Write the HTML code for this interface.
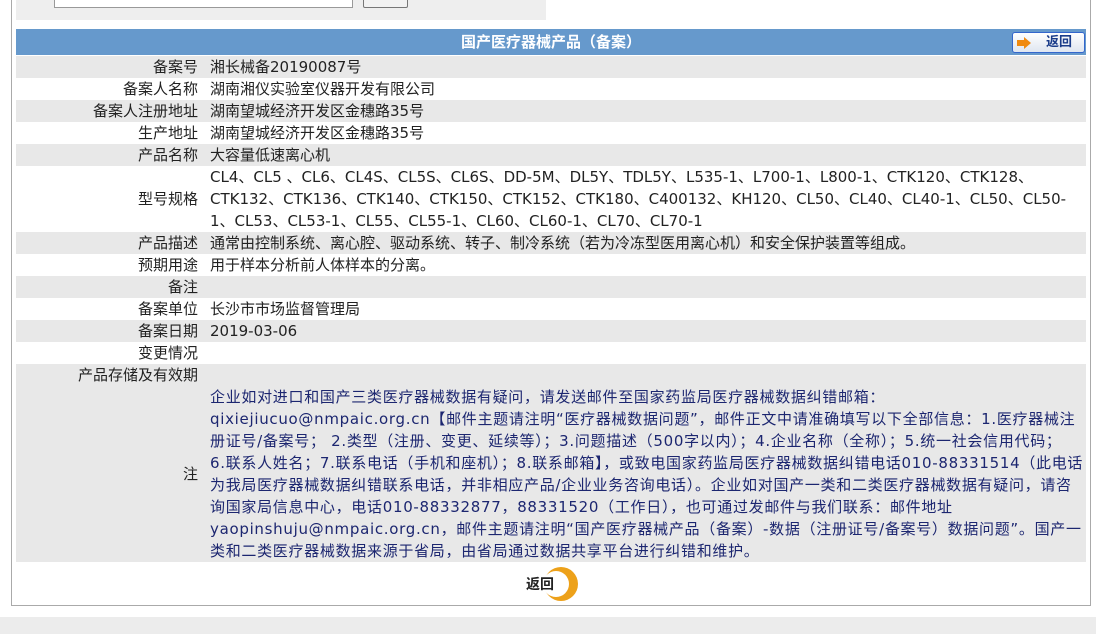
<!DOCTYPE html>
<html><head><meta charset="utf-8"><style>
*{margin:0;padding:0;box-sizing:border-box}
body{width:1096px;height:634px;background:#fff;font-family:"DejaVu Sans","Noto Sans CJK SC",sans-serif;font-size:15px;color:#222;position:relative;overflow:hidden}
.panel{position:absolute;left:11px;top:-2px;width:1080px;height:608px;border:1px solid #aaa;background:#fff}
.foot{position:absolute;left:0;top:617px;width:1096px;height:17px;background:#ececec}
.search{position:absolute;left:16px;top:0;width:530px;height:20px;background:#eee}
.inp{position:absolute;left:38px;top:-2px;width:299px;height:10px;border:1px solid #999;background:#fff}
.btn{position:absolute;left:347px;top:-2px;width:45px;height:10px;border:1px solid #777;border-radius:2px;background:#f2f2f2}
.hdr{position:absolute;left:16px;top:29px;width:1070px;height:26px;background:#6699cc;color:#fff;font-weight:bold;text-align:center;line-height:26px;font-size:15px}
.rb{position:absolute;right:1px;top:3px;width:73px;height:21px;border:1px solid #36c;border-radius:3px;background:linear-gradient(#fff,#dfe6f0);color:#1a3c8a;font-size:13px;line-height:19px;text-align:right;padding-right:12px}
.rb i{position:absolute;left:11px;top:4px;width:0;height:0;border-left:7px solid #f08a10;border-top:6px solid transparent;border-bottom:6px solid transparent}
.rb b{position:absolute;left:4px;top:7px;width:7px;height:6px;background:#f08a10}
table{position:absolute;left:16px;top:56px;width:1070px;border-collapse:collapse}
td{height:22px;line-height:22px;vertical-align:middle;font-size:15px;white-space:nowrap}
td.l{width:188px;text-align:right;padding-right:6px}
td.v{padding-left:6px}
tr.g td{background:#e8e8e8}
.note{color:#1c2670;line-height:22px;letter-spacing:0.7px}
.back{position:absolute;left:525px;top:566px;width:54px;height:36px}
</style></head><body>
<div class="panel"></div>
<div class="foot"></div>
<div class="search"><div class="inp"></div><div class="btn"></div></div>
<div class="hdr">国产医疗器械产品（备案）<div class="rb"><b></b><i></i>返回</div></div>
<table>
<tr class="g"><td class="l">备案号</td><td class="v">湘长械备20190087号</td></tr>
<tr><td class="l">备案人名称</td><td class="v">湖南湘仪实验室仪器开发有限公司</td></tr>
<tr class="g"><td class="l">备案人注册地址</td><td class="v">湖南望城经济开发区金穗路35号</td></tr>
<tr><td class="l">生产地址</td><td class="v">湖南望城经济开发区金穗路35号</td></tr>
<tr class="g"><td class="l">产品名称</td><td class="v">大容量低速离心机</td></tr>
<tr><td class="l" style="height:66px">型号规格</td><td class="v">CL4、CL5 、CL6、CL4S、CL5S、CL6S、DD-5M、DL5Y、TDL5Y、L535-1、L700-1、L800-1、CTK120、CTK128、<br>CTK132、CTK136、CTK140、CTK150、CTK152、CTK180、C400132、KH120、CL50、CL40、CL40-1、CL50、CL50-<br>1、CL53、CL53-1、CL55、CL55-1、CL60、CL60-1、CL70、CL70-1</td></tr>
<tr class="g"><td class="l">产品描述</td><td class="v">通常由控制系统、离心腔、驱动系统、转子、制冷系统（若为冷冻型医用离心机）和安全保护装置等组成。</td></tr>
<tr><td class="l">预期用途</td><td class="v">用于样本分析前人体样本的分离。</td></tr>
<tr class="g"><td class="l">备注</td><td class="v"></td></tr>
<tr><td class="l">备案单位</td><td class="v">长沙市市场监督管理局</td></tr>
<tr class="g"><td class="l">备案日期</td><td class="v">2019-03-06</td></tr>
<tr><td class="l">变更情况</td><td class="v"></td></tr>
<tr class="g"><td class="l">产品存储及有效期</td><td class="v"></td></tr>
<tr class="g"><td class="l" style="height:176px">注</td><td class="v note">企业如对进口和国产三类医疗器械数据有疑问，请发送邮件至国家药监局医疗器械数据纠错邮箱：<br>qixiejiucuo@nmpaic.org.cn【邮件主题请注明“医疗器械数据问题”，邮件正文中请准确填写以下全部信息：1.医疗器械注<br>册证号/备案号； 2.类型（注册、变更、延续等）；3.问题描述（500字以内）；4.企业名称（全称）；5.统一社会信用代码；<br>6.联系人姓名；7.联系电话（手机和座机）；8.联系邮箱】，或致电国家药监局医疗器械数据纠错电话010-88331514（此电话<br>为我局医疗器械数据纠错联系电话，并非相应产品/企业业务咨询电话）。企业如对国产一类和二类医疗器械数据有疑问，请咨<br>询国家局信息中心，电话010-88332877，88331520（工作日），也可通过发邮件与我们联系：邮件地址<br>yaopinshuju@nmpaic.org.cn，邮件主题请注明“国产医疗器械产品（备案）-数据（注册证号/备案号）数据问题”。国产一<br>类和二类医疗器械数据来源于省局，由省局通过数据共享平台进行纠错和维护。</td></tr>
</table>
<svg class="back" viewBox="0 0 54 36"><circle cx="36" cy="18" r="17" fill="#eda11a"/><circle cx="31" cy="18" r="13" fill="#fff"/><text x="1" y="23" font-family="DejaVu Sans,Noto Sans CJK SC,sans-serif" font-weight="bold" font-size="14" fill="#222">返回</text></svg>
</body></html>
